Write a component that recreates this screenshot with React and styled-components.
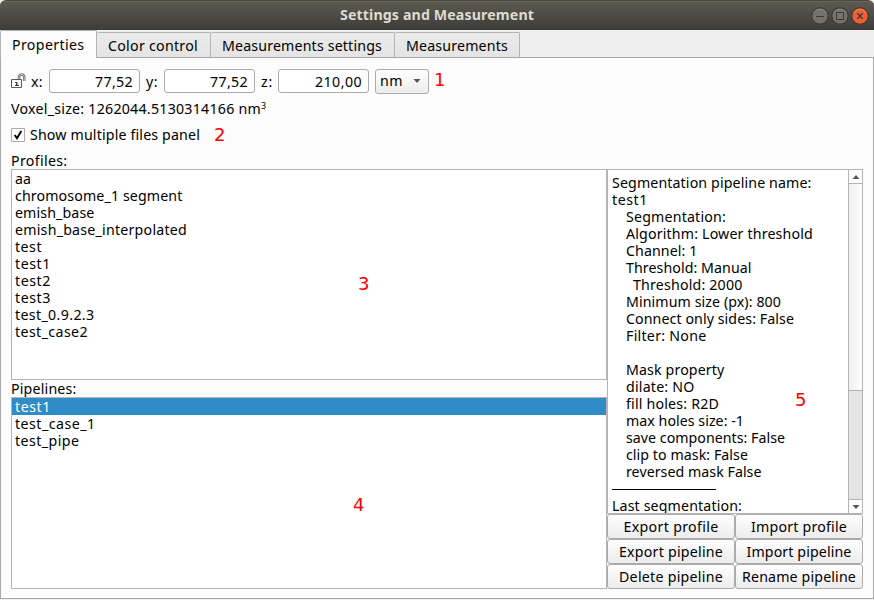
import React, { useLayoutEffect, useRef, useState } from "react";
import styled, { createGlobalStyle, css } from "styled-components";

const GlobalStyle = createGlobalStyle`
  * { box-sizing: border-box; }
  body { margin: 0; background: #fff; overflow: hidden; }
`;

const Window = styled.div`
  position: relative;
  width: 874px;
  height: 600px;
  display: flex;
  flex-direction: column;
  background: #efefef;
  font: 14.2px/17px "Noto Sans", sans-serif;
  color: #000;
`;

const TitleBar = styled.header`
  flex: none;
  height: 30px;
  display: grid;
  grid-template-columns: 1fr auto 1fr;
  align-items: center;
  border-radius: 6px 6px 0 0;
  border-top: 1px solid #4a4942;
  background: linear-gradient(#5d5b51, #3d3c38);
  box-shadow: inset 0 1px #69675b;
  color: #dfdbd2;
  font-weight: 700;
`;

const Title = styled.div`
  padding-bottom: 2px;
`;

const WindowControls = styled.div`
  display: flex;
  justify-content: flex-end;
  gap: 2px;
  padding-right: 5px;
`;

const ControlIcon = styled.svg`
  width: 18px;
  height: 18px;
`;

const TabBar = styled.nav`
  flex: none;
  height: 28px;
  display: flex;
  align-items: flex-end;
  border-bottom: 1px solid #a8a8a8;
`;

const Tab = styled.div`
  width: ${(p) => p.$width}px;
  height: 25px;
  padding: 4px 0 0 11px;
  border: 1px solid #b4b4b4;
  border-left-width: 0;
  border-bottom: 0;
  border-radius: 2px 2px 0 0;
  background: linear-gradient(#ebebeb, #e4e4e4);
  ${(p) =>
    p.$active &&
    css`
      height: 28px;
      margin-bottom: -1px;
      padding: 5px 0 0 11px;
      border-left-width: 1px;
      background: #fcfcfc;
    `}
`;

const Page = styled.main`
  flex: none;
  height: 541px;
  padding: 10px 10px 0;
  border: 1px solid #a8a8a8;
  border-top: 0;
  background: #fcfcfc;
`;

const SpacingRow = styled.div`
  display: flex;
  align-items: center;
  height: 26px;
`;

const LockIcon = styled.svg`
  width: 15px;
  height: 16px;
  margin-right: 5px;
`;

const AxisLabel = styled.span`
  width: ${(p) => p.$width}px;
`;

const NumberField = styled.div`
  width: 91px;
  height: 24px;
  margin: 0 6px 0 0;
  padding: 3px 6px 0 0;
  border: 1px solid #ababab;
  border-radius: 3px;
  background: #fff;
  text-align: right;
`;

const Select = styled.div`
  width: 54px;
  height: 25px;
  display: flex;
  align-items: center;
  justify-content: space-between;
  padding: 0 7px 1px 4px;
  border: 1px solid #ababab;
  border-radius: 3px;
  background: linear-gradient(#fefefe, #ececec);
`;

const Arrow = styled.svg`
  display: block;
  width: 8px;
  height: 4px;
  fill: #565656;
`;

const VoxelSize = styled.div`
  height: 17px;
  margin-top: 6px;
  white-space: nowrap;
`;

const Exponent = styled.span`
  font-size: 9px;
  position: relative;
  top: -5px;
`;

const CheckRow = styled.div`
  display: flex;
  align-items: center;
  gap: 5px;
  height: 17px;
  margin-top: 9px;
`;

const CheckBox = styled.svg`
  width: 14px;
  height: 14px;
`;

const Caption = styled.div`
  height: 17px;
`;

const Columns = styled.div`
  display: grid;
  grid-template-columns: 596px 256px;
  margin-top: 9px;
`;

const Column = styled.section`
  display: flex;
  flex-direction: column;
`;

const List = styled.div`
  height: ${(p) => p.$height}px;
  border: 1px solid #b4b4b4;
  background: #fff;
`;

const Item = styled.div`
  height: 17px;
  padding-left: 3px;
  ${(p) =>
    p.$selected &&
    css`
      background: #308cc6;
      color: #fff;
    `}
`;

const InfoPanel = styled.div`
  height: 345px;
  margin-top: 17px;
  display: flex;
  border: 1px solid #b4b4b4;
  background: #fff;
`;

const InfoText = styled.div`
  flex: 1;
  height: 343px;
  padding: 4px 0 0 4px;
  overflow: hidden;
`;

const InfoLine = styled.div`
  height: 17px;
  padding-left: ${(p) => p.$indent}px;
`;

const Divider = styled.div`
  width: 104px;
  height: 17px;
  border-bottom: 1px solid #000;
  margin: -7px 0 7px;
`;

const ScrollBar = styled.div`
  width: 14px;
  display: flex;
  flex-direction: column;
  border-left: 1px solid #b4b4b4;
  background: #e4e4e4;
`;

const ScrollButton = styled.div`
  height: ${(p) => p.$height}px;
  display: flex;
  align-items: center;
  justify-content: center;
  background: #fdfdfd;
  border-top: ${(p) => (p.$down ? "1px solid #b4b4b4" : "0")};
`;

const ScrollThumb = styled.div`
  height: 208px;
  margin-bottom: auto;
  border: solid #b4b4b4;
  border-width: 1px 0;
  background: linear-gradient(90deg, #f0f0f0, #fefefe);
`;

const ButtonGrid = styled.div`
  display: grid;
  grid-template-columns: 128px 128px;
  grid-auto-rows: 25px;
`;

const Button = styled.button`
  display: flex;
  align-items: center;
  justify-content: center;
  padding: 0;
  border: 1px solid #ababab;
  border-radius: 3px;
  background: linear-gradient(#fefefe, #ececec);
  font: inherit;
  color: inherit;
`;

const Marker = styled.span`
  position: absolute;
  left: ${(p) => p.$x}px;
  top: ${(p) => p.$y}px;
  font: 18px/20px "DejaVu Sans", sans-serif;
  color: #f00;
`;

const Tracked = styled.span`
  display: inline-block;
  white-space: pre;
`;

// Text whose letter spacing is adjusted so that it fills the given width.
function Text({ width, children }) {
  const ref = useRef(null);
  const [spacing, setSpacing] = useState(0);
  useLayoutEffect(() => {
    const natural = ref.current.getBoundingClientRect().width;
    setSpacing((width - natural) / children.length);
  }, [width, children]);
  return (
    <Tracked ref={ref} style={{ letterSpacing: spacing }}>
      {children}
    </Tracked>
  );
}

const tabs = [
  ["Properties", 97, 72.5],
  ["Color control", 114, 90],
  ["Measurements settings", 184, 160],
  ["Measurements", 125, 102],
];

const axes = [
  ["x:", "77,52", 18, 38],
  ["y:", "77,52", 18, 38],
  ["z:", "210,00", 17, 47],
];

const profiles = [
  ["aa", 16],
  ["chromosome_1 segment", 167.5],
  ["emish_base", 79.5],
  ["emish_base_interpolated", 172],
  ["test", 27],
  ["test1", 36],
  ["test2", 36],
  ["test3", 36],
  ["test_0.9.2.3", 79.5],
  ["test_case2", 73],
];

const pipelines = [
  ["test1", 36],
  ["test_case_1", 80.5],
  ["test_pipe", 64.5],
];

const info = [
  ["Segmentation pipeline name:", 199.5, 0],
  ["test1", 36, 0],
  ["Segmentation:", 100, 14],
  ["Algorithm: Lower threshold", 187, 14],
  ["Channel: 1", 71.5, 14],
  ["Threshold: Manual", 125.5, 14],
  ["Threshold: 2000", 109.5, 21],
  ["Minimum size (px): 800", 155, 14],
  ["Connect only sides: False", 168, 14],
  ["Filter: None", 80.5, 14],
  null,
  ["Mask property", 98.5, 14],
  ["dilate: NO", 68.5, 14],
  ["fill holes: R2D", 93, 14],
  ["max holes size: -1", 118, 14],
  ["save components: False", 159, 14],
  ["clip to mask: False", 122, 14],
  ["reversed mask False", 135.5, 14],
];

const actions = [
  ["Export profile", 95],
  ["Import profile", 96],
  ["Export pipeline", 104],
  ["Import pipeline", 105],
  ["Delete pipeline", 104],
  ["Rename pipeline", 114],
];

const markers = [
  ["1", 434, 70],
  ["2", 214, 125],
  ["3", 358, 274],
  ["4", 353, 495],
  ["5", 795, 390],
];

function Control({ kind }) {
  const close = kind === "close";
  return (
    <ControlIcon viewBox="0 0 18 18">
      <circle cx="9" cy="9" r="8.2" fill={close ? "#ee6034" : "#74726a"} stroke="#35342f" />
      <path
        d="M3 5.5A7.2 7.2 0 0 1 15 5.5"
        fill="none"
        stroke={close ? "#f58b66" : "#8b8980"}
        strokeWidth="0.8"
      />
      <g fill="none" stroke="#3c3b37" strokeWidth={close ? 1.4 : 1}>
        {kind === "min" && <path d="M5 9.5h8" />}
        {kind === "max" && <path d="M5.5 5.5h7v7h-7z" />}
        {close && <path d="M6.3 6.3l5.4 5.4M11.7 6.3l-5.4 5.4" />}
      </g>
    </ControlIcon>
  );
}

function Triangle({ up }) {
  return (
    <Arrow viewBox="0 0 8 4">
      <path d={up ? "M0.5 4h7L4 0z" : "M0.5 0h7L4 4z"} />
    </Arrow>
  );
}

export default function App() {
  return (
    <>
      <GlobalStyle />
      <Window>
        <TitleBar>
          <span />
          <Title>
            <Text width={194}>Settings and Measurement</Text>
          </Title>
          <WindowControls>
            <Control kind="min" />
            <Control kind="max" />
            <Control kind="close" />
          </WindowControls>
        </TitleBar>
        <TabBar>
          {tabs.map(([label, width, textWidth], i) => (
            <Tab key={label} $width={width} $active={i === 0}>
              <Text width={textWidth}>{label}</Text>
            </Tab>
          ))}
        </TabBar>
        <Page>
          <SpacingRow>
            <LockIcon viewBox="0 0 15 16" fill="none">
              <path d="M8 7V3.4L9.6 1.7H12L13.2 3.4V8" stroke="#6e6e6e" strokeWidth="2.6" />
              <path d="M8 7V3.4L9.6 1.7H12L13.2 3.4V8" stroke="#dcdcdc" strokeWidth="0.8" />
              <path d="M0.5 6.5h10v8h-10z" fill="#fff" stroke="#5a5a5a" />
              <path d="M4 9.5h2v3M4 12.5h4M5.5 9v4" stroke="#4b3b32" />
            </LockIcon>
            {axes.map(([label, value, width, textWidth]) => (
              <React.Fragment key={label}>
                <AxisLabel $width={width}>
                  <Text width={12}>{label}</Text>
                </AxisLabel>
                <NumberField>
                  <Text width={textWidth}>{value}</Text>
                </NumberField>
              </React.Fragment>
            ))}
            <Select>
              <Text width={23}>nm</Text>
              <Triangle />
            </Select>
          </SpacingRow>
          <VoxelSize>
            <Text width={250}>Voxel_size: 1262044.5130314166 nm</Text>
            <Exponent>3</Exponent>
          </VoxelSize>
          <CheckRow>
            <CheckBox viewBox="0 0 14 14">
              <path d="M0.5 0.5h13v13h-13z" fill="#fff" stroke="#ababab" />
              <path d="M3.7 7l2.3 3.3L10.3 3" fill="none" stroke="#000" strokeWidth="1.9" />
            </CheckBox>
            <Text width={170}>Show multiple files panel</Text>
          </CheckRow>
          <Columns>
            <Column>
              <Caption>
                <Text width={56.5}>Profiles:</Text>
              </Caption>
              <List $height={211}>
                {profiles.map(([name, width]) => (
                  <Item key={name}>
                    <Text width={width}>{name}</Text>
                  </Item>
                ))}
              </List>
              <Caption>
                <Text width={65.5}>Pipelines:</Text>
              </Caption>
              <List $height={192}>
                {pipelines.map(([name, width], i) => (
                  <Item key={name} $selected={i === 0}>
                    <Text width={width}>{name}</Text>
                  </Item>
                ))}
              </List>
            </Column>
            <Column>
              <InfoPanel>
                <InfoText>
                  {info.map((line, i) => (
                    <InfoLine key={i} $indent={line ? line[2] : 0}>
                      {line && <Text width={line[1]}>{line[0]}</Text>}
                    </InfoLine>
                  ))}
                  <Divider />
                  <InfoLine $indent={0}>
                    <Text width={130}>Last segmentation:</Text>
                  </InfoLine>
                </InfoText>
                <ScrollBar>
                  <ScrollButton $height={13}>
                    <Triangle up />
                  </ScrollButton>
                  <ScrollThumb />
                  <ScrollButton $height={14} $down>
                    <Triangle />
                  </ScrollButton>
                </ScrollBar>
              </InfoPanel>
              <ButtonGrid>
                {actions.map(([label, width]) => (
                  <Button key={label}>
                    <Text width={width}>{label}</Text>
                  </Button>
                ))}
              </ButtonGrid>
            </Column>
          </Columns>
        </Page>
        {markers.map(([label, x, y]) => (
          <Marker key={label} $x={x} $y={y}>
            {label}
          </Marker>
        ))}
      </Window>
    </>
  );
}
